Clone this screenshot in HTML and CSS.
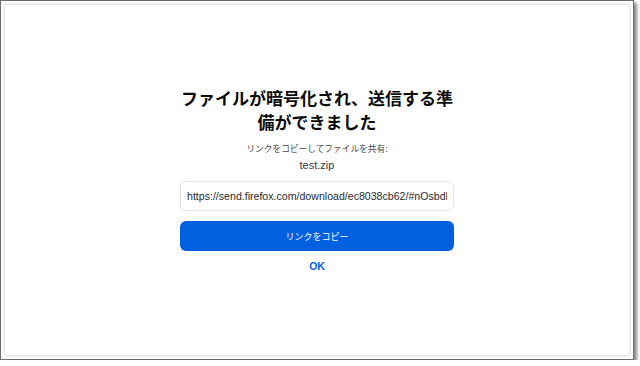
FILE: index.html
```html
<!DOCTYPE html>
<html lang="ja">
<head>
    <meta charset="UTF-8">
    <title>Firefox Send</title>
    <link rel="stylesheet" href="styles.css">
</head>
<body>
    <div class="frame">
        <div class="panel">
            <div class="upload-done">
                <h1 class="title">ファイルが暗号化され、送信する準備ができました</h1>
                <p class="share-label">リンクをコピーしてファイルを共有:</p>
                <p class="file-name">test.zip</p>
                <input type="text" class="share-url" value="https://send.firefox.com/download/ec8038cb62/#nOsbdFqGLsJ7kJpC" readonly>
                <button type="button" class="copy-button">リンクをコピー</button>
                <a href="#" class="ok-link">OK</a>
            </div>
        </div>
    </div>
</body>
</html>
```

FILE: styles.css
```css
body {
    margin: 0;
    background-color: #fff;
    font-family: Inter, "Noto Sans CJK JP", sans-serif;
}
.frame {
    width: 628px;
    height: 354px;
    border: 1px solid #6d6d6d;
    box-shadow: 3px 3px 3px rgba(0, 0, 0, 0.45);
    background-color: #fff;
    padding: 2px;
}
.panel {
    height: 350px;
    border: 2px solid #ececec;
    border-radius: 5px;
    display: flex;
    justify-content: center;
}
.upload-done {
    width: 274px;
    margin-top: 81px;
    display: flex;
    flex-direction: column;
    align-items: center;
}
.title {
    margin: 0;
    font-family: "Noto Sans CJK JP", sans-serif;
    font-size: 17px;
    line-height: 24px;
    font-weight: bold;
    color: #0c0c0d;
    text-align: center;
}
.share-label {
    margin: 8px 0 0;
    font-family: "Noto Sans CJK JP", sans-serif;
    font-size: 8.7px;
    line-height: 14px;
    color: #4a4a4f;
}
.file-name {
    margin: 2px 0 0;
    font-family: "Liberation Sans", sans-serif;
    font-size: 11px;
    line-height: 14px;
    color: #38383d;
}
.share-url {
    margin-top: 9px;
    width: 100%;
    height: 30px;
    box-sizing: border-box;
    padding: 0 6px;
    border: 1px solid #e3e3e6;
    border-radius: 6px;
    font-family: "Liberation Sans", sans-serif;
    font-size: 10.6px;
    color: #2a2a2e;
    outline: none;
}
.copy-button {
    margin-top: 10px;
    width: 100%;
    height: 30px;
    border: none;
    border-radius: 6px;
    background-color: #0060df;
    color: white;
    font-family: "Noto Sans CJK JP", sans-serif;
    font-size: 9px;
    cursor: pointer;
}
.ok-link {
    margin-top: 8px;
    font-family: "Liberation Sans", sans-serif;
    font-size: 10.5px;
    line-height: 14px;
    font-weight: bold;
    color: #0060df;
    text-decoration: none;
}
```
